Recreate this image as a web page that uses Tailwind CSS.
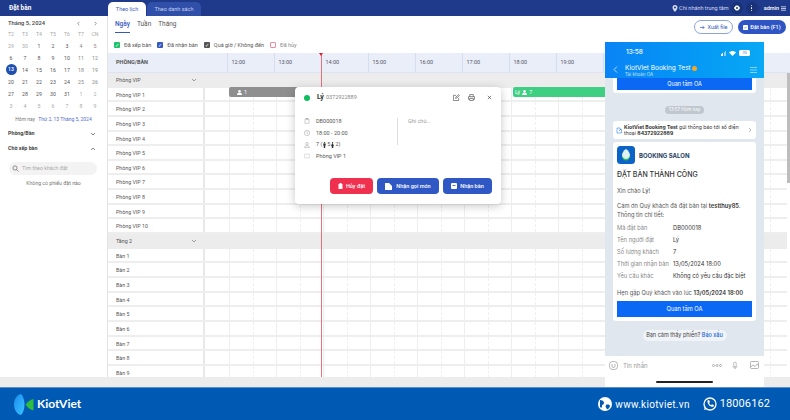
<!DOCTYPE html>
<html lang="en">
  <head>
    <meta charset="utf-8">
    <title>Đặt bàn</title>
    <script src="https://cdn.jsdelivr.net/npm/@tailwindcss/browser@4"></script>
  </head>
  <body class="w-[790px] h-[420px] overflow-hidden bg-white font-['Roboto',sans-serif] text-[#333]">
    <div class="relative w-[790px] h-[420px] flex flex-col overflow-hidden">

      <!-- Top bar -->
      <header class="h-[16px] shrink-0 bg-[#1f3a8a] flex text-white">
        <div class="w-[108px] pl-[9px] text-[6.5px] font-bold leading-[17px]">Đặt bàn</div>
        <div class="flex items-end gap-[1px] h-full">
          <div class="w-[38px] h-[14px] bg-white text-[#3558c0] rounded-t-[5px] text-[5.5px] text-center leading-[15px]">Theo lịch</div>
          <div class="w-[54px] h-[14px] bg-[#2f4fa8] text-[#c4cff0] rounded-t-[5px] text-[5.5px] text-center leading-[15px]">Theo danh sách</div>
        </div>
        <div class="ml-auto flex items-center pr-[4px] text-[5.5px] text-[#d5dcf2]">
          <svg class="w-[6px] h-[7px] mr-[1px]" viewBox="0 0 12 14" fill="currentColor"><path d="M6 0a5 5 0 0 0-5 5c0 4 5 9 5 9s5-5 5-9a5 5 0 0 0-5-5zm0 7a2 2 0 1 1 0-4 2 2 0 0 1 0 4z"/></svg>
          <span>Chi nhánh trung tâm</span>
          <span class="ml-[2px] w-[12px] h-[12px] rounded-full bg-[#1a3278] flex items-center justify-center">
            <svg class="w-[6px] h-[6px]" viewBox="0 0 12 12" fill="white"><path d="M6 0l1.200 1.600 2-.2.6 1.900 1.900.8-.5 1.900.5 1.900-1.900.8-.6 1.900-2-.2L6 12l-1.200-1.600-2 .2-.6-1.900L.3 7.900.8 6 .3 4.100l1.900-.8.6-1.900 2 .2z"/><circle cx="6" cy="6" r="2" fill="#1a3278"/></svg>
          </span>
          <span class="ml-[3px] w-[12px] h-[12px] rounded-full bg-[#1a3278] flex flex-col items-center justify-center gap-[1px]">
            <i class="w-[1.5px] h-[1.5px] bg-white rounded-full"></i><i class="w-[1.5px] h-[1.5px] bg-white rounded-full"></i><i class="w-[1.5px] h-[1.5px] bg-white rounded-full"></i>
          </span>
          <span class="ml-[6px] font-medium text-white">admin</span>
          <svg class="w-[5px] h-[5px] ml-[2px]" viewBox="0 0 6 5" fill="#d5dcf2"><rect width="6" height="1"/><rect y="2" width="6" height="1"/><rect y="4" width="6" height="1"/></svg>
        </div>
      </header>

      <div class="flex flex-1 min-h-0">
        <!-- Sidebar -->
        <aside class="w-[108px] shrink-0 border-r border-[#e3e3e3] px-[8px] pt-[2px]">
          <div class="flex items-center h-[11px] text-[5.8px] font-medium text-[#444]">
            <span>Tháng 5, 2024</span>
            <svg class="w-[5px] h-[5px] ml-auto text-[#666]" viewBox="0 0 6 6" fill="none" stroke="currentColor" stroke-width=".8"><path d="M4 1L2 3l2 2"/></svg>
            <svg class="w-[5px] h-[5px] ml-[12px] mr-[1.5px] text-[#666]" viewBox="0 0 6 6" fill="none" stroke="currentColor" stroke-width=".8"><path d="M2 1l2 2-2 2"/></svg>
          </div>
          <div id="calendar" class="grid grid-cols-[repeat(7,14px)] grid-rows-[repeat(7,12px)] -ml-[4px] -mt-[1px] text-[5.2px] text-center leading-[12px] text-[#555]"></div>
          <div class="mt-[4px] text-center -mx-[4px] text-[5px] leading-[7px] text-[#777] whitespace-nowrap">Hôm nay <span class="text-[#5570cc] ml-[2px]">Thứ 2, 13 Tháng 5, 2024</span></div>
          <div class="flex justify-between items-center mt-[7px] h-[8px] text-[5.3px] font-bold text-[#444]">
            <span>Phòng/Bàn</span>
            <svg class="w-[6px] h-[6px] mr-[3px] text-[#555]" viewBox="0 0 6 6" fill="none" stroke="currentColor" stroke-width=".7"><path d="M1 2l2 2 2-2"/></svg>
          </div>
          <div class="flex justify-between items-center mt-[7px] h-[8px] text-[5.3px] font-bold text-[#444]">
            <span>Chờ xếp bàn</span>
            <svg class="w-[6px] h-[6px] mr-[3px] text-[#555]" viewBox="0 0 6 6" fill="none" stroke="currentColor" stroke-width=".7"><path d="M1 4l2-2 2 2"/></svg>
          </div>
          <div class="mt-[9px] w-[88px] ml-[1px] h-[13px] rounded-full bg-[#f3f3f3] flex items-center pl-[3px] text-[5.3px] text-[#aaa]">
            <svg class="w-[7px] h-[7px] text-[#666]" viewBox="0 0 8 8" fill="none" stroke="currentColor" stroke-width=".8"><circle cx="3.400" cy="3.400" r="2.400"/><path d="M5.200 5.200L7.400 7.400"/></svg>
            <span class="ml-[3px]">Tìm theo khách đặt</span>
          </div>
          <div class="mt-[5px] text-center text-[5.2px] text-[#777]">Không có phiếu đặt nào</div>
        </aside>

        <!-- Main -->
        <main class="flex-1 min-w-0 flex flex-col">
          <div class="h-[21px] shrink-0 relative flex items-start pl-[7px] gap-[7px] pt-[4px] text-[6.5px] text-[#555]">
            <span class="text-[#3558c0] font-medium border-b border-[#3558c0] pb-[3px] leading-[9px]">Ngày</span>
            <span class="leading-[9px]">Tuần</span>
            <span class="leading-[9px]">Tháng</span>
            <div class="absolute right-[4px] top-[4px] flex gap-[5px]">
              <div class="h-[14px] w-[39px] rounded-full border border-[#8ea2df] flex items-center justify-center gap-[3px] text-[5.5px] text-[#3558c0]">
                <svg class="w-[5px] h-[5px]" viewBox="0 0 6 6" fill="none" stroke="currentColor" stroke-width=".8"><path d="M0 3h5M3 1l2 2-2 2"/></svg>Xuất file
              </div>
              <div class="h-[14px] w-[48px] rounded-full bg-[#2f55c4] flex items-center justify-center gap-[2px] text-[5.5px] font-medium text-white">
                <svg class="w-[5px] h-[5px]" viewBox="0 0 6 6"><rect width="6" height="6" rx="1" fill="white"/><path d="M1.500 3l1 1 2-2" stroke="#2f55c4" stroke-width=".7" fill="none"/></svg>Đặt bàn (F1)
              </div>
            </div>
          </div>

          <div class="h-[16px] shrink-0 flex items-center pl-[6px] text-[5.5px] text-[#555]">
            <span class="w-[6px] h-[6px] rounded-[1px] bg-[#1cc26a] text-white text-[5px] leading-[6px] text-center">✓</span><span class="ml-[4px]">Đã xếp bàn</span>
            <span class="ml-[6px] w-[6px] h-[6px] rounded-[1px] bg-[#3558c0] text-white text-[5px] leading-[6px] text-center">✓</span><span class="ml-[4px]">Đã nhận bàn</span>
            <span class="ml-[6px] w-[6px] h-[6px] rounded-[1px] bg-[#555] text-white text-[5px] leading-[6px] text-center">✓</span><span class="ml-[4px]">Quá giờ / Không đến</span>
            <span class="ml-[6px] w-[6px] h-[6px] rounded-[1px] border border-[#f08a9c]"></span><span class="ml-[4px] text-[#888]">Đã hủy</span>
          </div>

          <!-- Schedule -->
          <div class="flex-1 min-h-0 overflow-hidden">
            <div class="flex h-[20px] bg-[#e9eef9] border-b border-[#dde3f1]">
              <div class="w-[95px] shrink-0 pl-[8px] text-[5.5px] font-bold text-[#555] leading-[19px]">PHÒNG/BÀN</div>
              <div class="w-[2px] bg-[#dde3f1]"></div>
              <div id="hours" class="flex pl-[24px] text-[5.5px] text-[#556] leading-[19px]"></div>
            </div>
            <div id="rows"></div>
          </div>
        </main>
      </div>

      <div class="h-[10px] shrink-0 bg-[#ececec]"></div>

      <!-- Footer banner -->
      <footer class="h-[33px] shrink-0 bg-[#0059b3] border-t border-[#5d8fc6] flex items-center text-white">
        <svg class="w-[20px] h-[21px] ml-[14px]" viewBox="0 0 20 21">
          <defs><linearGradient id="kvBlue" x1="0" y1="0" x2="1" y2="1"><stop offset="0" stop-color="#1a8cf0"/><stop offset="1" stop-color="#39c4ff"/></linearGradient></defs>
          <path d="M7 0C2.500 1 0 5.500 0 10.500S2.500 20 7 21c2-2 3.500-6 3.500-10.500S9 2 7 0z" fill="url(#kvBlue)"/>
          <path d="M19.500 5v11.500c-3-.5-6-3-8-6 2-2.500 5-5 8-5.500z" fill="#2ebd3c"/>
        </svg>
        <span class="ml-[3px] font-['Lato',sans-serif] text-[12px] font-bold">KiotViet</span>
        <div class="ml-auto flex items-center pr-[20px]">
          <svg class="w-[14px] h-[14px]" viewBox="0 0 14 14"><circle cx="7" cy="7" r="7" fill="white"/><path d="M2 3c2 0 4 1 4 3s-2 1-2 3-1 2-2 1zM8 8c2-1 4 0 4 1s-2 4-3 3-2-3-1-4z" fill="#0059b3"/></svg>
          <span class="ml-[3px] text-[10px] tracking-[.3px]">www.kiotviet.vn</span>
          <svg class="w-[14px] h-[14px] ml-[13px]" viewBox="0 0 14 14" fill="none"><circle cx="7" cy="7" r="6" stroke="white" stroke-width="1.300"/><path d="M4.500 3.500l1.500-.5 1 2-1 1c.4 1 1.200 1.800 2 2.200l1-1 2 1-.5 1.600c-3.500.5-6.500-3-6-6.300z" fill="white"/><path d="M1 13l1-3 2 2z" fill="white"/></svg>
          <span class="ml-[3px] text-[11px] tracking-[.1px]">18006162</span>
        </div>
      </footer>

      <!-- Now marker -->
      <div class="absolute left-[321px] top-[55px] w-[1px] h-[322px] bg-[#e8707e]"></div>
      <div class="absolute left-[319px] top-[53px] w-0 h-0 border-x-[2.5px] border-x-transparent border-t-[3px] border-t-[#e81c2e]"></div>

      <!-- Booking bars -->
      <div class="absolute left-[229px] top-[87px] w-[70px] h-[10px] rounded-[2px] bg-[#8f8f8f] flex items-center pl-[8px] text-[5.5px] text-white">
        <svg class="w-[5px] h-[5px] mr-[2px]" viewBox="0 0 6 6" fill="white"><circle cx="3" cy="1.500" r="1.500"/><path d="M0 6c0-2 1.500-3 3-3s3 1 3 3z"/></svg>1
      </div>
      <div class="absolute left-[513px] top-[87px] w-[92px] h-[10px] bg-[#3fcf83] rounded-l-[2px] flex items-center pl-[2px] text-[5.5px] text-white">
        <span>Lý</span>
        <svg class="w-[5px] h-[5px] mx-[2px]" viewBox="0 0 6 6" fill="white"><circle cx="3" cy="1.500" r="1.500"/><path d="M0 6c0-2 1.500-3 3-3s3 1 3 3z"/></svg>7
      </div>

      <!-- Booking popup -->
      <div class="absolute left-[295px] top-[87px] w-[206px] h-[117px] bg-white rounded-[4px] shadow-[0_2px_10px_rgba(0,0,0,.22)] flex flex-col px-[9px] pt-[6px] pb-[10px]">
        <div class="flex items-center h-[9px]">
          <span class="w-[6px] h-[6px] rounded-full bg-[#0fbf5f]"></span>
          <span class="ml-[7px] text-[7px] font-bold text-[#333]">Lý</span>
          <span class="ml-[2px] text-[5.5px] text-[#888]">0372922889</span>
          <svg class="w-[7px] h-[7px] ml-auto text-[#444]" viewBox="0 0 8 8" fill="none" stroke="currentColor" stroke-width=".7"><path d="M6.500 4.500V7.500H.5V1.500H3.500M3 5l.3-1.500L6.500.8 7.300 1.600 4.300 4.700z"/></svg>
          <svg class="w-[7px] h-[7px] ml-[8px] text-[#444]" viewBox="0 0 8 8" fill="none" stroke="currentColor" stroke-width=".7"><path d="M2 3V.5h4V3M2 6H.5V3h7v3H6M2 5h4v2.500H2z"/></svg>
          <svg class="w-[5px] h-[5px] ml-[12px] text-[#444]" viewBox="0 0 6 6" fill="none" stroke="currentColor" stroke-width=".8"><path d="M1 1l4 4M5 1L1 5"/></svg>
        </div>
        <div class="flex mt-[16px] text-[5.5px] text-[#555]">
          <div class="w-[94px] flex flex-col gap-[5.2px] leading-[6.5px] border-r border-[#ddd] h-[27px] overflow-visible">
            <div class="flex items-center"><svg class="w-[6px] h-[6px] shrink-0 text-[#999]" viewBox="0 0 6 6" fill="none" stroke="currentColor" stroke-width=".5"><rect x="1" y=".8" width="4" height="5" rx=".6"/><path d="M2 .4h2v1H2z"/></svg><span class="ml-[6px]">DB000018</span></div>
            <div class="flex items-center"><svg class="w-[6px] h-[6px] shrink-0 text-[#999]" viewBox="0 0 6 6" fill="none" stroke="currentColor" stroke-width=".5"><circle cx="3" cy="3" r="2.600"/><path d="M3 1.500V3l1 .6"/></svg><span class="ml-[6px]">18:00 - 20:00</span></div>
            <div class="flex items-center whitespace-nowrap">
              <svg class="w-[6px] h-[6px] shrink-0 text-[#999]" viewBox="0 0 6 6" fill="none" stroke="currentColor" stroke-width=".5"><circle cx="3" cy="1.700" r="1.300"/><path d="M.6 5.600c0-1.300 1-2 2.400-2s2.400.7 2.400 2z"/></svg>
              <span class="ml-[6px]">7 (</span>
              <svg class="w-[3px] h-[6px] mx-[1px]" viewBox="0 0 3 6" fill="#333"><circle cx="1.500" cy=".7" r=".7"/><path d="M.3 1.600h2.400v2h-.5V6H.8V3.600H.3z"/></svg>
              <span>5</span>
              <svg class="w-[3px] h-[6px] mx-[1px]" viewBox="0 0 3 6" fill="#333"><circle cx="1.500" cy=".7" r=".7"/><path d="M1 1.600h1l1 2.600H2.200V6H.8V4.200H0z"/></svg>
              <span>2)</span>
            </div>
            <div class="flex items-center"><svg class="w-[6px] h-[6px] shrink-0 text-[#bbb]" viewBox="0 0 6 6" fill="none" stroke="currentColor" stroke-width=".5"><rect x=".3" y="1.200" width="5.400" height="3.600" rx=".4"/></svg><span class="ml-[6px]">Phòng VIP 1</span></div>
          </div>
          <div class="pl-[10px] text-[#999] leading-[6.5px]">Ghi chú...</div>
        </div>
        <div class="mt-auto flex justify-end gap-[4px] text-[5.5px] font-medium text-white">
          <div class="w-[43px] h-[16px] rounded-[4px] bg-[#f0304f] flex items-center justify-center gap-[3px]">
            <svg class="w-[5px] h-[6px]" viewBox="0 0 5 6" fill="white"><path d="M.5 1h4v5h-4zM1.500 0h2v1h-2z"/></svg>Hủy đặt
          </div>
          <div class="w-[62px] h-[16px] rounded-[4px] bg-[#3058c4] flex items-center justify-center gap-[4px]">
            <svg class="w-[7px] h-[7px]" viewBox="0 0 6 6" fill="white"><path d="M0 0h3.500L6 2.500V6H0z"/></svg>Nhận gọi món
          </div>
          <div class="w-[49px] h-[16px] rounded-[4px] bg-[#3058c4] flex items-center justify-center gap-[3px]">
            <svg class="w-[6px] h-[6px]" viewBox="0 0 6 6"><rect width="6" height="6" rx="1" fill="white"/><path d="M1.500 2.500h3" stroke="#3058c4" stroke-width=".8"/></svg>Nhận bàn
          </div>
        </div>
      </div>

      <!-- Scrollbar -->
      <div class="absolute left-[787px] top-[73px] w-[3px] h-[304px] bg-white">
        <div class="h-[110px] bg-[#bdbdbd]"></div>
      </div>

      <!-- Phone screenshot -->
      <div class="absolute left-[605px] top-[42px] w-[159px] h-[345px] bg-[#e0e7ef] flex flex-col font-['Inter',sans-serif] text-[#333] overflow-hidden">
        <div class="h-[36px] shrink-0 bg-gradient-to-r from-[#0a84f5] to-[#09a8f5] text-white relative z-10">
          <div class="flex items-center h-[22px] pl-[21px] pr-[14px]">
            <span class="text-[6.5px] font-medium">13:58</span>
            <div class="ml-auto flex items-end gap-[.5px] h-[5px]">
              <i class="w-[1px] h-[2px] bg-white"></i><i class="w-[1px] h-[3px] bg-white"></i><i class="w-[1px] h-[4px] bg-white/50"></i><i class="w-[1px] h-[5px] bg-white/50"></i>
            </div>
            <svg class="w-[7px] h-[5px] ml-[3px]" viewBox="0 0 7 5" fill="white"><path d="M3.500 5L0 1.500C2 -.5 5 -.5 7 1.500z"/></svg>
            <span class="ml-[3px] w-[11px] h-[5.5px] rounded-[1.5px] bg-white text-[#1a80f0] text-[4px] leading-[5.5px] text-center">70</span>
          </div>
          <div class="flex items-start pl-[8px] pr-[7px]">
            <svg class="w-[5px] h-[7px] mt-[2px] mr-[7px]" viewBox="0 0 5 7" fill="none" stroke="white" stroke-width=".7"><path d="M4 .5L1 3.500l3 3"/></svg>
            <div>
              <div class="text-[6.5px] leading-[8px] flex items-center">KiotViet Booking Test<span class="ml-[1.5px] w-[5px] h-[5px] rounded-full bg-[#f5a623]"></span></div>
              <div class="text-[4.5px] leading-[5px] text-[#cfe4ff]">Tài khoản OA</div>
            </div>
            <svg class="w-[7px] h-[6px] ml-auto mt-[3px]" viewBox="0 0 7 6" stroke="white" stroke-width=".5"><path d="M0 .5h7M0 3h7M0 5.500h7"/></svg>
          </div>
        </div>

        <div class="flex-1 min-h-0 flex flex-col px-[8px]">
          <div class="bg-white rounded-b-[3px] pb-[3px] px-[4px]">
            <div class="h-[12px] bg-[#0a68f5] text-white text-[5.5px] text-center leading-[12px]">Quan tâm OA</div>
          </div>
          <div class="self-center mt-[13px] h-[8px] w-[39px] rounded-full bg-[#c0c7cf] text-white text-[4.5px] text-center leading-[8px]">13:57 Hôm nay</div>
          <div class="mt-[7px] h-[18px] bg-white rounded-[3px] flex items-center pl-[3px] pr-[4px] text-[5.1px] leading-[6px]">
            <svg class="w-[7px] h-[7px] shrink-0 text-[#2f80ed]" viewBox="0 0 7 7" fill="none" stroke="currentColor" stroke-width=".6"><path d="M1 1h3v1.500h1.500V6H1zM3 4l2-2"/></svg>
            <div class="ml-[1px] flex-1 whitespace-nowrap"><b>KiotViet Booking Test</b> gửi thông báo tới số điện<br>thoại <b>84372922889</b></div>
            <svg class="w-[4px] h-[6px] shrink-0 text-[#777]" viewBox="0 0 4 6" fill="none" stroke="currentColor" stroke-width=".5"><path d="M1 1l2 2-2 2"/></svg>
          </div>
          <div class="mt-[3px] h-[179px] shrink-0 bg-white rounded-[3px] px-[4px] pt-[4px] text-[5.75px]">
            <div class="flex items-center">
              <svg class="w-[18px] h-[18px]" viewBox="0 0 18 18"><rect width="18" height="18" rx="3.500" fill="#0b63c5"/><path d="M9 3c2.500 1.500 4 4 4 6.500S11 14 9 14 5 12 5 9.500 6.500 4.500 9 3z" fill="#dff3ee"/><path d="M5 9.500c1 2.500 2.500 3.500 4 3.500s3-1 4-3.500c0 3-2 5-4 5s-4-2-4-5z" fill="#2ebd5c"/></svg>
              <span class="ml-[4px] text-[6px] font-bold text-[#1f3d63]">BOOKING SALON</span>
            </div>
            <div class="mt-[6px] text-[7px] font-medium leading-[9px]">ĐẶT BÀN THÀNH CÔNG</div>
            <div class="mt-[8px] leading-[7px] text-[#555]">Xin chào <span class="font-medium">Lý</span>!</div>
            <div class="mt-[6.5px] leading-[9px] text-[#555]">Cảm ơn Quý khách đã đặt bàn tại <b class="font-semibold text-[#333]">testthuy85</b>.<br>Thông tin chi tiết:</div>
            <div class="mt-[3.5px] grid grid-cols-[56px_1fr] auto-rows-[12px] leading-[12px] text-[#333]">
              <span class="text-[#888]">Mã đặt bàn</span><span>DB000018</span>
              <span class="text-[#888]">Tên người đặt</span><span>Lý</span>
              <span class="text-[#888]">Số lượng khách</span><span>7</span>
              <span class="text-[#888]">Thời gian nhận bàn</span><span>13/05/2024 18:00</span>
              <span class="text-[#888]">Yêu cầu khác</span><span>Không có yêu cầu đặc biệt</span>
            </div>
            <div class="mt-[6.5px] leading-[7px] text-[#555] whitespace-nowrap">Hẹn gặp Quý khách vào lúc <b class="font-semibold text-[#333]">13/05/2024 18:00</b></div>
            <div class="mt-[5px] h-[16px] bg-[#0a68f5] text-white text-center leading-[16px]">Quan tâm OA</div>
          </div>
          <div class="self-center mt-[9px] h-[11px] w-[84px] text-center rounded-full bg-[#f0f3f7] text-[5.5px] leading-[11px] text-[#444]">Bạn cảm thấy phiền? <b class="text-[#1667d9] font-medium">Báo xấu</b></div>
        </div>

        <div class="h-[31px] shrink-0 bg-white relative">
          <div class="flex items-center h-[18px] pl-[4px] pr-[5px] text-[#888] text-[6px]">
            <svg class="w-[9px] h-[9px]" viewBox="0 0 9 9" fill="none" stroke="#888" stroke-width=".6"><rect x=".5" y=".5" width="8" height="8" rx="3"/><path d="M3 3v2a1.500 1.500 0 0 0 3 0V3"/></svg>
            <span class="ml-[5px] text-[#999]">Tin nhắn</span>
            <svg class="w-[10px] h-[3px] ml-auto" viewBox="0 0 10 3" fill="none" stroke="#888" stroke-width=".6"><circle cx="1.500" cy="1.500" r="1"/><circle cx="5" cy="1.500" r="1"/><circle cx="8.500" cy="1.500" r="1"/></svg>
            <svg class="w-[6px] h-[9px] ml-[10px]" viewBox="0 0 7 9" fill="none" stroke="#888" stroke-width=".6"><rect x="2" y=".5" width="3" height="5.500" rx="1.500"/><path d="M1 5c0 3 5 3 5 0M3.500 7v1.500"/></svg>
            <svg class="w-[9px] h-[8px] ml-[12px]" viewBox="0 0 9 8" fill="none" stroke="#888" stroke-width=".6"><rect x=".5" y=".5" width="8" height="7" rx="1"/><path d="M.5 6l2.500-2 2 1.500L7 3l1.500 1.500"/></svg>
          </div>
          <div class="absolute left-[51px] top-[25px] w-[57px] h-[2px] rounded-full bg-[#222]"></div>
        </div>
      </div>
    </div>

    <script>
      // month grid, first cell is 29/04
      const calendar = document.getElementById("calendar");
      ["T2", "T3", "T4", "T5", "T6", "T7", "CN"].forEach((d) => {
        const c = document.createElement("span");
        c.className = "text-[#aaa]";
        c.textContent = d;
        calendar.appendChild(c);
      });
      const days = [29, 30];
      for (let i = 1; i <= 31; i++) days.push(i);
      for (let i = 1; i <= 9; i++) days.push(i);
      days.forEach((d, i) => {
        const c = document.createElement("span");
        const outside = i < 2 || i > 32;
        const weekend = i % 7 > 4;
        c.textContent = d;
        if (i === 14) {
          c.className = "w-[11px] h-[11px] mx-auto rounded-full bg-[#1f4fb0] text-white font-medium leading-[11px]";
        } else if (outside) {
          c.className = "text-[#aaa]";
        } else if (weekend) {
          c.className = "text-[#888]";
        }
        calendar.appendChild(c);
      });

      const hours = document.getElementById("hours");
      ["12:00", "13:00", "14:00", "15:00", "16:00", "17:00", "18:00", "19:00", "20:00", "21:00", "22:00", "23:00"].forEach((h) => {
        const c = document.createElement("div");
        c.className = "w-[47px] shrink-0 pl-[3.5px] border-l border-[#d5ddf0]";
        c.textContent = h;
        hours.appendChild(c);
      });

      // half hour cells: solid line on the hour, dashed on the half
      let cells = '<div class="w-[24px] shrink-0"></div>';
      for (let i = 0; i < 12; i++) {
        cells += '<div class="w-[23.5px] shrink-0 border-l border-[#eeeeee]"></div>';
        cells += '<div class="w-[23.5px] shrink-0 border-l border-dashed border-[#f0f0f0]"></div>';
      }
      const rows = document.getElementById("rows");
      function addGroup(name) {
        const r = document.createElement("div");
        r.className = "flex h-[14.65px] bg-[#ececec] text-[5.3px] text-[#555] leading-[14px]";
        r.innerHTML = '<div class="w-[95px] shrink-0 pl-[8px] flex justify-between pr-[6px] items-center">' + name +
          '<svg class="w-[6px] h-[6px]" viewBox="0 0 6 6" fill="none" stroke="#666" stroke-width=".6"><path d="M1 2l2 2 2-2"/></svg></div>';
        rows.appendChild(r);
      }
      function addRow(name) {
        const r = document.createElement("div");
        r.className = "flex h-[14.65px] border-b-2 border-[#eeeeee] text-[5.3px] text-[#555] leading-[15px] overflow-hidden";
        r.innerHTML = '<div class="w-[95px] shrink-0 pl-[8px]">' + name + '</div><div class="w-[2px] shrink-0 bg-[#e8e8e8]"></div>' + cells;
        rows.appendChild(r);
      }
      addGroup("Phòng VIP");
      for (let i = 1; i <= 10; i++) addRow("Phòng VIP " + i);
      addGroup("Tầng 2");
      for (let i = 1; i <= 9; i++) addRow("Bàn " + i);
    </script>
  </body>
</html>
